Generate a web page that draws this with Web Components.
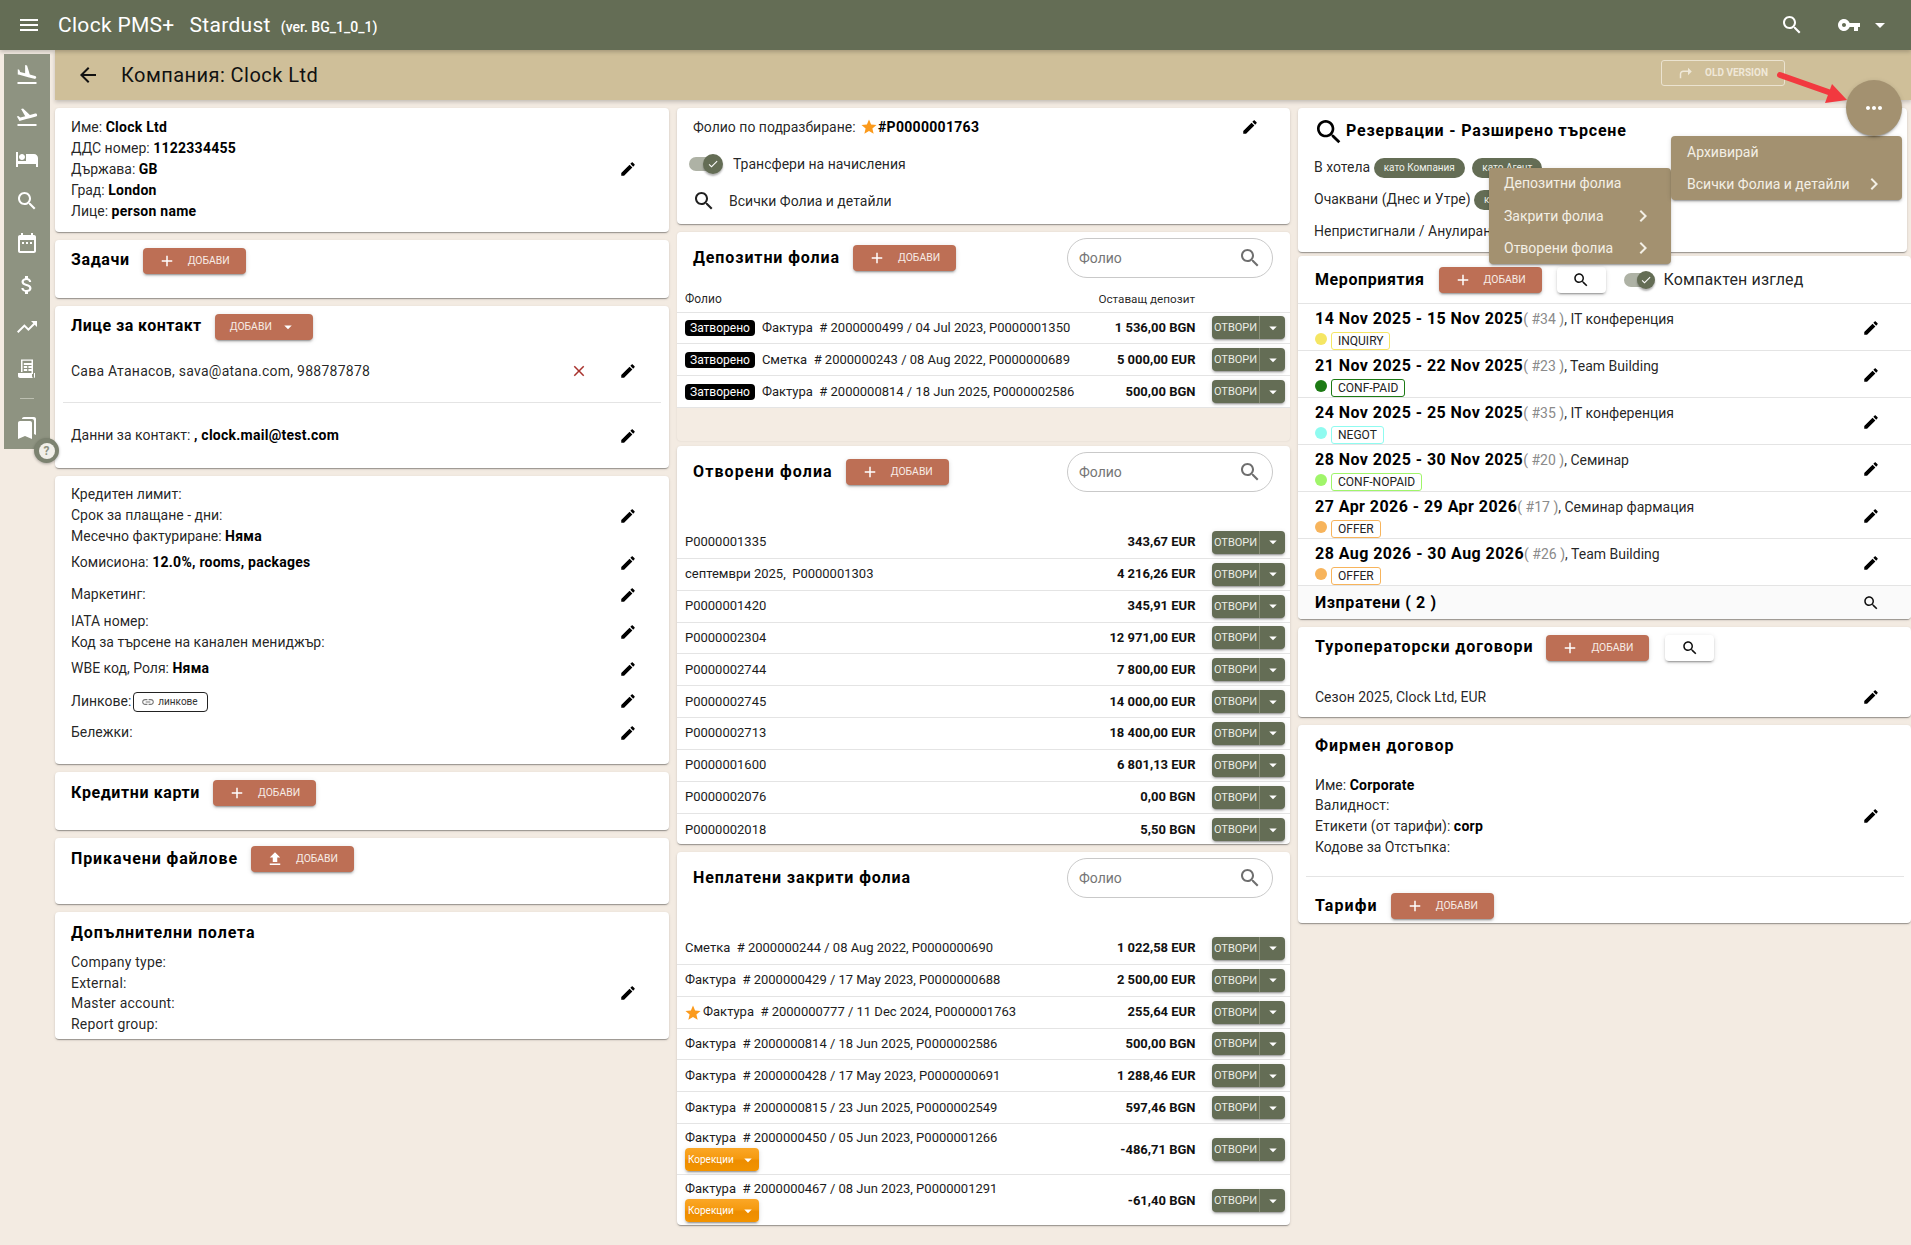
<!DOCTYPE html>
<html lang="bg">
<head>
<meta charset="utf-8">
<title>Clock PMS+ Stardust</title>
<style>
  html, body { margin: 0; height: 100%; overflow: hidden; }
  body { background: #f3ebe2; font: 14px/21px Roboto, "Noto Sans", sans-serif; color: rgba(0,0,0,.87); }
</style>
</head>
<body>
<clock-app></clock-app>

<script>
// Material icon paths used across the page
const ICONS = {
  menu: 'M3 18h18v-2H3v2zm0-5h18v-2H3v2zm0-7v2h18V6H3z',
  back: 'M20 11H7.83l5.59-5.59L12 4l-8 8 8 8 1.41-1.41L7.83 13H20v-2z',
  search: 'M15.5 14h-.79l-.28-.27C15.41 12.59 16 11.11 16 9.5 16 5.91 13.09 3 9.5 3S3 5.91 3 9.5 5.91 16 9.5 16c1.61 0 3.09-.59 4.23-1.57l.27.28v.79l5 4.99L20.49 19l-4.99-5zm-6 0C7.01 14 5 11.99 5 9.5S7.01 5 9.5 5 14 7.01 14 9.5 11.99 14 9.5 14z',
  key: 'M12.65 10C11.83 7.67 9.61 6 7 6c-3.31 0-6 2.69-6 6s2.69 6 6 6c2.61 0 4.83-1.67 5.65-4H17v4h4v-4h2v-4H12.65zM7 14c-1.1 0-2-.9-2-2s.9-2 2-2 2 .9 2 2-.9 2-2 2z',
  caret: 'M7 10l5 5 5-5z',
  land: 'M2.5 19h19v2h-19zm7.18-5.73l4.35 1.16 5.31 1.42c.8.21 1.62-.26 1.84-1.06.21-.8-.26-1.62-1.06-1.84l-5.31-1.42-2.76-9.02L10.12 2v8.28L5.15 8.95l-.93-2.32-1.45-.39v5.17l1.6.43 5.31 1.43z',
  takeoff: 'M2.5 19h19v2h-19zm19.57-9.36c-.21-.8-1.04-1.28-1.84-1.06L14.92 10l-6.9-6.43-1.93.51 4.14 7.17-4.97 1.33-1.97-1.54-1.45.39 1.82 3.16.77 1.33 1.6-.43 5.31-1.42 4.35-1.16L21 11.49c.81-.23 1.28-1.05 1.07-1.85z',
  hotel: 'M7 13c1.66 0 3-1.34 3-3S8.66 7 7 7s-3 1.34-3 3 1.34 3 3 3zm12-6h-8v7H3V5H1v15h2v-3h18v3h2v-9c0-2.21-1.79-4-4-4z',
  calendar: 'M9 11H7v2h2v-2zm4 0h-2v2h2v-2zm4 0h-2v2h2v-2zm2-7h-1V2h-2v2H8V2H6v2H5c-1.11 0-1.99.9-1.99 2L3 20c0 1.1.89 2 2 2h14c1.1 0 2-.9 2-2V6c0-1.1-.9-2-2-2zm0 16H5V9h14v11z',
  money: 'M11.8 10.9c-2.27-.59-3-1.2-3-2.15 0-1.09 1.01-1.85 2.7-1.85 1.78 0 2.44.85 2.5 2.1h2.21c-.07-1.72-1.12-3.3-3.21-3.81V3h-3v2.16c-1.94.42-3.5 1.68-3.5 3.61 0 2.31 1.91 3.46 4.7 4.13 2.5.6 3 1.48 3 2.41 0 .69-.49 1.79-2.7 1.79-2.06 0-2.87-.92-2.98-2.1h-2.2c.12 2.19 1.76 3.42 3.68 3.83V21h3v-2.15c1.95-.37 3.5-1.5 3.5-3.55 0-2.84-2.43-3.81-4.7-4.4z',
  trend: 'M16 6l2.29 2.29-4.88 4.88-4-4L2 16.59 3.41 18l6-6 4 4 6.3-6.29L22 12V6z',
  ledger: 'M6 2l1 1 1-1 1 1 1-1 1 1 1-1 1 1 1-1 1 1 1-1 1 1 1-1v15h-1.5V3.8H7.5V15H6zM8.8 6h8v2h-8zm0 3h3.4v2H8.8zm4.6 0h3.4v2h-3.4zm-4.6 3h3.4v2H8.8zm4.6 0h3.4v2h-3.4zM3 16h14v3c0 1.1.6 2 1.6 2H5c-1.1 0-2-.9-2-2zm16 0h1v3.5c0 .8-.4 1.5-1 1.5z',
  bookmarks: 'M19 18l2 1V3c0-1.1-.9-2-2-2H8.99C7.89 1 7 1.9 7 3h10c1.1 0 2 .9 2 2v13zM15 5H5c-1.1 0-2 .9-2 2v16l7-3 7 3V7c0-1.1-.9-2-2-2z',
  edit: 'M3 17.25V21h3.75L17.81 9.94l-3.75-3.75L3 17.25zM20.71 7.04c.39-.39.39-1.02 0-1.41l-2.34-2.34c-.39-.39-1.02-.39-1.41 0l-1.83 1.83 3.75 3.75 1.83-1.83z',
  add: 'M19 13h-6v6h-2v-6H5v-2h6V5h2v6h6v2z',
  close: 'M19 6.41L17.59 5 12 10.59 6.41 5 5 6.41 10.59 12 5 17.59 6.41 19 12 13.41 17.59 19 19 17.59 13.41 12z',
  star: 'M12 17.27L18.18 21l-1.64-7.03L22 9.24l-7.19-.61L12 2 9.19 8.63 2 9.24l5.46 4.73L5.82 21z',
  chevron: 'M10 6L8.59 7.41 13.17 12l-4.58 4.59L10 18l6-6z',
  upload: 'M9 16h6v-6h4l-7-7-7 7h4zm-4 2h14v2H5z',
  link: 'M3.9 12c0-1.71 1.39-3.1 3.1-3.1h4V7H7c-2.76 0-5 2.24-5 5s2.24 5 5 5h4v-1.9H7c-1.71 0-3.1-1.39-3.1-3.1zM8 13h8v-2H8v2zm9-6h-4v1.9h4c1.71 0 3.1 1.39 3.1 3.1s-1.39 3.1-3.1 3.1h-4V17h4c2.76 0 5-2.24 5-5s-2.24-5-5-5z',
  more: 'M6 10c-1.1 0-2 .9-2 2s.9 2 2 2 2-.9 2-2-.9-2-2-2zm12 0c-1.1 0-2 .9-2 2s.9 2 2 2 2-.9 2-2-.9-2-2-2zm-6 0c-1.1 0-2 .9-2 2s.9 2 2 2 2-.9 2-2-.9-2-2-2z',
  check: 'M9 16.17L4.83 12l-1.42 1.41L9 19 21 7l-1.41-1.41z',
  forward: 'M21 10l-5-5v3.6h-6C7 8.6 5 10.6 5 13.6V19h2v-5.4c0-1.8 1.2-3 3-3h6V15z',
}

const CARD_SHADOW = '0 2px 1px -1px rgba(0,0,0,.2), 0 1px 1px 0 rgba(0,0,0,.14), 0 1px 3px 0 rgba(0,0,0,.12)'
const RAISED = '0 3px 1px -2px rgba(0,0,0,.2), 0 2px 2px 0 rgba(0,0,0,.14), 0 1px 5px 0 rgba(0,0,0,.12)'

const icon = (name, size = 24, color = 'currentColor') =>
  `<svg width="${size}" height="${size}" viewBox="0 0 24 24" fill="${color}" style="display:block;flex:none"><path d="${ICONS[name]}"/></svg>`

// Small base class: subclasses return their markup from html()
class ShadowElement extends HTMLElement {
  connectedCallback() {
    if (this.shadowRoot) return
    this.attachShadow({ mode: 'open' })
    this.shadowRoot.innerHTML = this.html()
  }
  attr(name, fallback = '') {
    return this.getAttribute(name) ?? fallback
  }
}

class PmsIcon extends ShadowElement {
  html() {
    return `<style>:host { display: inline-flex; flex: none; }</style>
      ${icon(this.attr('name'), this.attr('size', 24), this.attr('color', 'currentColor'))}`
  }
}

class PmsButton extends ShadowElement {
  html() {
    const lead = this.attr('icon')
    const trail = this.hasAttribute('caret')
    return `<style>
      :host { display: inline-flex; flex: none; }
      button {
        display: flex; align-items: center; height: 26px; padding: 0 16px 0 15px; border: 0; border-radius: 4px;
        background: #bd6f55; color: #f7ece6; font: 400 10.4px/26px Roboto, sans-serif; text-transform: uppercase;
        box-shadow: ${RAISED};
      }
      .lead { margin-right: 12px; }
      .trail { margin-left: 7px; }
    </style>
    <button type="button">
      ${lead ? `<span class="lead">${icon(lead, 18, '#fff')}</span>` : ''}
      <slot></slot>
      ${trail ? `<span class="trail">${icon('caret', 18, '#fff')}</span>` : ''}
    </button>`
  }
}

class FindButton extends ShadowElement {
  html() {
    return `<style>
      :host { display: inline-flex; flex: none; }
      button {
        display: flex; align-items: center; justify-content: center; width: 49px; height: 26px; padding: 0; border: 0;
        border-radius: 4px; background: #fff; box-shadow: ${RAISED}; color: #111;
      }
    </style><button type="button" aria-label="Търси">${icon('search', 18)}</button>`
  }
}

class PmsToggle extends ShadowElement {
  html() {
    return `<style>
      :host { display: inline-flex; align-items: center; flex: none; }
      .track { position: relative; width: var(--track-w, 32px); height: 14px; border-radius: 7px; background: #aeb2a5; }
      .thumb {
        position: absolute; right: var(--thumb-off, -2px); top: 50%; width: var(--thumb, 20px); height: var(--thumb, 20px); margin-top: calc(var(--thumb, 20px) / -2);
        border-radius: 50%; background: #646d55; display: flex; align-items: center; justify-content: center; box-shadow: 0 2px 2px rgba(0,0,0,.3);
      }
      .label { margin-left: var(--toggle-gap, 12px); font: var(--toggle-font, 400 14px/20px Roboto, sans-serif); letter-spacing: var(--toggle-spacing, 0); }
    </style>
    <span class="track"><span class="thumb">${icon('check', 12, '#fff')}</span></span>
    <span class="label"><slot></slot></span>`
  }
}

class PmsCard extends ShadowElement {
  html() {
    return `<style>
      :host { display: block; background: #fff; border-radius: 4px; box-shadow: ${CARD_SHADOW}; overflow: hidden; }
    </style><slot></slot>`
  }
}

// Card header: bold title, then whatever actions are slotted in
class CardHead extends ShadowElement {
  html() {
    return `<style>
      :host { display: flex; align-items: center; gap: 13px; padding: var(--head-pad, 8px 16px 0); height: var(--head-h, 26px); }
      h3 {
        margin: 0; position: relative; top: var(--title-shift, 0); font: 700 16px/22px Roboto, sans-serif;
        letter-spacing: var(--title-spacing, .9px); color: #000; white-space: nowrap;
      }
      .end { margin-left: auto; display: flex; }
    </style>
    <h3>${this.attr('label')}</h3><slot></slot><span class="end"><slot name="end"></slot></span>`
  }
}

// A text block with the pencil at the right, vertically centred on it
class DetailRow extends ShadowElement {
  html() {
    return `<style>
      :host { display: flex; align-items: center; padding: 0 32px 0 16px; min-height: var(--row-h, 0); box-sizing: border-box; }
      .text { flex: 1; line-height: var(--line, 21px); position: relative; top: var(--text-shift, 0); }
      .del { margin-right: 31px; }
    </style>
    <div class="text"><slot></slot></div>
    ${this.hasAttribute('removable') ? `<span class="del">${icon('close', 18, '#a8322d')}</span>` : ''}
    ${icon('edit', 18, '#000')}`
  }
}

class FolioSearch extends ShadowElement {
  html() {
    return `<style>
      :host {
        display: flex; align-items: center; justify-content: space-between; width: 206px; height: 40px; box-sizing: border-box;
        border: 1px solid #c9c9c9; border-radius: 20px; padding: 0 10px 0 11px; color: #757575; font: 14px Roboto, sans-serif;
      }
    </style><span>Фолио</span>${icon('search', 24, '#6f6f6f')}`
  }
}

class OpenButton extends ShadowElement {
  html() {
    return `<style>
      :host {
        display: inline-flex; flex: none; width: 73px; height: 23px; border-radius: 4px; background: #646d55; color: #eceee6;
        font: 400 11px/23px Roboto, sans-serif; box-shadow: ${RAISED};
      }
      .main { width: 47px; text-align: center; border-right: 1px solid #8a9079; }
      .more { flex: 1; display: flex; align-items: center; justify-content: center; }
    </style><span class="main">ОТВОРИ</span><span class="more">${icon('caret', 18, '#fff')}</span>`
  }
}

class FolioRow extends ShadowElement {
  html() {
    const status = this.attr('status')
    const fix = this.hasAttribute('fix')
    return `<style>
      :host {
        display: flex; align-items: center; box-sizing: border-box; min-height: 31.85px; padding: ${fix ? '4px 5px 3px 8px' : '0 5px 0 8px'};
        border-bottom: 1px solid #e4e4e4; font: 13px/20px Roboto, sans-serif; color: #1c1c1c;
      }
      :host([last]) { border-bottom: 0; }
      .text { flex: 1; white-space: nowrap; display: flex; flex-direction: column; align-items: flex-start; }
      .line { display: flex; align-items: center; }
      .state {
        background: #000; color: #fff; border-radius: 4px; height: 16px; line-height: 16px; padding: 0 5px; font-size: 12px; margin-right: 7px;
      }
      .star { margin: 2px 1px 0 -1px; }
      .fix {
        display: flex; align-items: center; justify-content: space-between; box-sizing: border-box; width: 74px; height: 23px; padding: 0 2px 0 3px;
        border-radius: 4px; color: #fff; font-size: 10px; background: linear-gradient(#fba726, #f59a10 45%, #ed8d00 55%, #f29300);
        box-shadow: ${RAISED};
      }
      .amount { font-weight: 700; color: #111; margin-right: 16.5px; white-space: nowrap; }
    </style>
    <div class="text">
      <span class="line">
        ${status ? `<span class="state">${status}</span>` : ''}
        ${this.hasAttribute('star') ? `<span class="star">${icon('star', 18, '#fb9a1c')}</span>` : ''}
        <span><slot></slot></span>
      </span>
      ${fix ? `<span class="fix">Корекции${icon('caret', 18, '#fff')}</span>` : ''}
    </div>
    <span class="amount">${this.attr('amount')}</span>
    <open-button></open-button>`
  }
}

class EventRow extends ShadowElement {
  html() {
    const color = this.attr('color')
    return `<style>
      :host {
        display: flex; box-sizing: border-box; height: 47px; padding: 5px 31px 0 17px; border-bottom: 1px solid #e4e4e4;
        align-items: center; font: 14px/20px Roboto, sans-serif;
      }
      .body { flex: 1; align-self: flex-start; }
      .head { height: 20px; white-space: nowrap; }
      .dates { font: 700 16px/20px Roboto, sans-serif; letter-spacing: .45px; color: #000; }
      .num { color: #8a8a8a; }
      .foot { display: flex; align-items: flex-start; margin-top: 3px; }
      .dot { width: 12px; height: 12px; border-radius: 50%; background: ${color}; margin: 1px 4px 0 0; }
      .tag {
        height: 18px; box-sizing: border-box; border: 1px solid ${color}; border-radius: 3px; padding: 0 6px;
        font-size: 12px; line-height: 16px; color: #222;
      }
      svg { margin-top: -4px; }
    </style>
    <div class="body">
      <div class="head"><span class="dates">${this.attr('dates')}</span><span class="num">( ${this.attr('num')} )</span>, ${this.attr('kind')}</div>
      <div class="foot"><span class="dot"></span><span class="tag">${this.attr('state')}</span></div>
    </div>
    ${icon('edit', 18, '#000')}`
  }
}

class AppToolbar extends ShadowElement {
  html() {
    return `<style>
      :host {
        display: flex; align-items: center; height: 50px; background: #646d55; color: #fff; position: relative; z-index: 3;
        box-shadow: 0 2px 4px rgba(0,0,0,.2); font: 400 21px/50px Roboto, sans-serif; letter-spacing: .3px; padding-left: 17px;
      }
      .brand { margin-left: 17px; }
      .name { margin-left: 15px; }
      small { margin-left: 10px; font-size: 14px; font-weight: 500; letter-spacing: 0; position: relative; top: 2px; }
      .right { margin-left: auto; display: flex; align-items: center; padding-right: 19px; }
    </style>
    ${icon('menu')}
    <span class="brand">Clock PMS+</span><span class="name">Stardust</span><small>(ver. BG_1_0_1)</small>
    <span class="right">${icon('search')}<span style="width:33px"></span>${icon('key')}<span style="width:7px"></span>${icon('caret')}</span>`
  }
}

class SideRail extends ShadowElement {
  html() {
    const items = ['land', 'takeoff', 'hotel', 'search', 'calendar', 'money', 'trend', 'ledger']
    return `<style>
      :host { display: block; position: relative; width: 46px; margin: 4px 0 0 4px; background: #8e9381; height: 395px; color: #fff; }
      .item { height: 42px; display: flex; align-items: center; justify-content: center; }
      hr { width: 14px; margin: 8px auto 8px; border: 0; border-top: 1px solid #bcbfb1; height: 0; }
      .help {
        position: absolute; left: 30px; top: 384px; width: 25px; height: 25px; border-radius: 50%; background: #7c8270;
        display: flex; align-items: center; justify-content: center; box-shadow: 0 1px 3px rgba(0,0,0,.3);
      }
      .help span {
        width: 16px; height: 16px; border-radius: 50%; background: #f1efe9; color: #8e9381; font: 700 12px/16px Roboto, sans-serif; text-align: center;
      }
    </style>
    ${items.map(n => `<div class="item">${icon(n)}</div>`).join('')}
    <hr>
    <div class="item">${icon('bookmarks')}</div>
    <div class="help"><span>?</span></div>`
  }
}

class PageHeader extends ShadowElement {
  html() {
    return `<style>
      :host {
        display: flex; align-items: center; height: 50px; background: #cfbf99; position: relative; z-index: 2;
        box-shadow: 0 2px 4px rgba(0,0,0,.2); padding-left: 21px; color: #111; font: 400 20px/50px Roboto, sans-serif;
      }
      h1 { font: inherit; letter-spacing: .45px; margin: 0 0 0 21px; }
      .old {
        display: flex; align-items: center; box-sizing: border-box; width: 124px; height: 26px; margin: -4px 126px 0 auto; padding: 0 16px 0 14px;
        border: 1px solid #ebe3d0; border-radius: 3px; color: #efe8d8; font: 700 10px/24px Roboto, sans-serif; justify-content: space-between;
      }
    </style>
    ${icon('back')}<h1>${this.attr('label')}</h1>
    <span class="old">${icon('forward', 18, '#efe8d8')}OLD VERSION</span>`
  }
}

// The open speed-dial menus and the red annotation arrow lie over the third column
class SpeedDial extends ShadowElement {
  html() {
    const item = (text, more) => `<div class="item"><span>${text}</span>${more ? icon('chevron', 24, '#f3efe5') : ''}</div>`
    return `<style>
      :host { position: absolute; inset: 0; z-index: 5; pointer-events: none; font: 14px/32px Roboto, sans-serif; color: #f3efe5; }
      .fab {
        position: absolute; left: 1846px; top: 80px; width: 56px; height: 56px; border-radius: 50%; background: #a39170;
        display: flex; align-items: center; justify-content: center; box-shadow: ${RAISED};
      }
      .menu { position: absolute; background: #a39170; border-radius: 4px; box-shadow: ${RAISED}; box-sizing: border-box; }
      .m1 { left: 1671px; top: 136px; width: 231px; height: 64px; padding-left: 16px; }
      .m2 { left: 1489px; top: 168px; width: 182px; height: 96px; padding-left: 15px; }
      .m2 .item:first-child span { position: relative; top: -1px; }
      .item { display: flex; align-items: center; justify-content: space-between; height: 32px; white-space: nowrap; padding-right: 16px; }
      svg.arrow { position: absolute; left: 0; top: 0; }
    </style>
    <div class="menu m2">${item('Депозитни фолиа')}${item('Закрити фолиа', 1)}${item('Отворени фолиа', 1)}</div>
    <div class="menu m1">${item('Архивирай')}${item('Всички Фолиа и детайли', 1)}</div>
    <div class="fab">${icon('more', 24, '#fff')}</div>
    <svg class="arrow" width="1911" height="140" viewBox="0 0 1911 140">
      <line x1="1780" y1="75" x2="1834" y2="94" stroke="#f2393f" stroke-width="6" stroke-linecap="round"/>
      <polygon points="1832,84 1847,100 1825,103" fill="#f2393f"/>
    </svg>`
  }
}

class ClockApp extends ShadowElement {
  html() {
    return document.getElementById('app-view').innerHTML
  }
}

customElements.define('pms-icon', PmsIcon)
customElements.define('pms-button', PmsButton)
customElements.define('find-button', FindButton)
customElements.define('pms-toggle', PmsToggle)
customElements.define('pms-card', PmsCard)
customElements.define('card-head', CardHead)
customElements.define('detail-row', DetailRow)
customElements.define('folio-search', FolioSearch)
customElements.define('open-button', OpenButton)
customElements.define('folio-row', FolioRow)
customElements.define('event-row', EventRow)
customElements.define('app-toolbar', AppToolbar)
customElements.define('side-rail', SideRail)
customElements.define('page-header', PageHeader)
customElements.define('speed-dial', SpeedDial)
</script>

<template id="app-view">
  <style>
    :host { display: block; position: relative; width: 1911px; height: 1245px; overflow: hidden; }
    b { font-weight: 700; color: #000; letter-spacing: .25px; }
    .shell { display: flex; }
    .rail { width: 55px; flex: none; position: relative; z-index: 4; }
    .main { flex: 1; min-width: 0; }
    .cols { display: grid; grid-template-columns: 614px 613px 613px; gap: 8px; padding-top: 8px; align-items: start; }
    .col { display: flex; flex-direction: column; gap: 8px; min-width: 0; }
    hr { border: 0; border-top: 1px solid #e4e4e4; margin: 0 8px; }
    .tight { --title-spacing: .6px; }
    .wide { --title-spacing: 1.1px; }
    .up { --title-shift: -1px; }
    .nudge { --text-shift: -1px; }
    .chip {
      display: inline-block; height: 20px; border-radius: 10px; background: #646d55; color: #f1f2ec; font-size: 10px; line-height: 20px;
      padding: 0 10px; vertical-align: 1px;
    }
    .chip + .chip { margin-left: 4px; }
    .find-row { display: flex; align-items: center; padding: 0 16px; }
    .link-chip {
      display: inline-flex; align-items: center; gap: 3px; height: 20px; width: 75px; box-sizing: border-box; padding-left: 7px; margin-left: -1.5px; position: relative; top: 3px;
      border: 1px solid #222; border-radius: 4px; font-size: 10px; color: #333;
    }
    .table-head {
      display: flex; justify-content: space-between; height: 27px; box-sizing: border-box; padding: 3px 95px 0 8px; line-height: 20px;
      font-size: 12px; border-bottom: 1px solid #e4e4e4;
    }
    .res-row { height: 32px; padding: 0 16px; line-height: 32px; white-space: nowrap; }
    .search-head { --head-pad: 6px 17px 7.5px 16px; --head-h: 40px; }
    .folio-gap { --head-pad: 6px 17px 35px 16px; --head-h: 40px; }
    .res-head { display: flex; align-items: flex-start; padding: 8px 0 3px 15px; height: 32px; }
    .res-head h3 { margin: 4px 0 0 1px; font: 700 16px/22px Roboto, sans-serif; letter-spacing: .83px; color: #000; }
  </style>

  <app-toolbar></app-toolbar>
  <div class="shell">
    <div class="rail"><side-rail></side-rail></div>
    <div class="main">
      <page-header label="Компания: Clock Ltd"></page-header>
      <div class="cols">

        <div class="col">
          <pms-card style="height:124px;padding-top:8.5px;box-sizing:border-box">
            <detail-row>
              <div>Име: <b>Clock Ltd</b></div>
              <div>ДДС номер: <b>1122334455</b></div>
              <div>Държава: <b>GB</b></div>
              <div>Град: <b>London</b></div>
              <div>Лице: <b>person name</b></div>
            </detail-row>
          </pms-card>
          <pms-card style="height:58px">
            <card-head class="tight up" label="Задачи"><pms-button icon="add">Добави</pms-button></card-head>
          </pms-card>
          <pms-card style="height:162px">
            <card-head class="up" style="--title-spacing:.45px" label="Лице за контакт"><pms-button caret>Добави</pms-button></card-head>
            <detail-row removable style="--row-h:62px"><span style="letter-spacing:.25px">Сава Атанасов, sava@atana.com, 988787878</span></detail-row>
            <hr>
            <detail-row style="--row-h:65px">Данни за контакт: <b>, clock.mail@test.com</b></detail-row>
          </pms-card>
          <pms-card style="height:288px;padding-top:8px;box-sizing:border-box">
            <detail-row>
              <div>Кредитен лимит:</div>
              <div>Срок за плащане - дни:</div>
              <div>Месечно фактуриране: <b>Няма</b></div>
            </detail-row>
            <detail-row class="nudge" style="--row-h:32px">Комисиона: <b>12.0%, rooms, packages</b></detail-row>
            <detail-row class="nudge" style="--row-h:32px">Маркетинг:</detail-row>
            <detail-row style="--row-h:42px">
              <div>IATA номер:</div>
              <div>Код за търсене на канален мениджър:</div>
            </detail-row>
            <detail-row class="nudge" style="--row-h:32px">WBE код, Роля: <b>Няма</b></detail-row>
            <detail-row class="nudge" style="--row-h:32px">Линкове: <span class="link-chip"><pms-icon name="link" size="14" color="#777"></pms-icon>линкове</span></detail-row>
            <detail-row class="nudge" style="--row-h:32px">Бележки:</detail-row>
          </pms-card>
          <pms-card style="height:58px">
            <card-head class="tight" label="Кредитни карти"><pms-button icon="add">Добави</pms-button></card-head>
          </pms-card>
          <pms-card style="height:66px">
            <card-head label="Прикачени файлове"><pms-button icon="upload">Добави</pms-button></card-head>
          </pms-card>
          <pms-card style="height:127px">
            <card-head label="Допълнителни полета" style="--head-pad:8px 16px 6px;--head-h:26px"></card-head>
            <detail-row style="--line:20.67px;letter-spacing:.2px">
              <div>Company type:</div>
              <div>External:</div>
              <div>Master account:</div>
              <div>Report group:</div>
            </detail-row>
          </pms-card>
        </div>

        <div class="col">
          <pms-card style="height:116px">
            <detail-row style="--row-h:38px;padding-right:31px">Фолио по подразбиране: <pms-icon name="star" size="18" color="#fb9a1c" style="vertical-align:-4px;margin-left:1px"></pms-icon><b style="letter-spacing:.3px">#P0000001763</b></detail-row>
            <div class="find-row" style="height:36px;padding-left:12px"><pms-toggle>Трансфери на начисления</pms-toggle></div>
            <div class="find-row" style="height:38px;padding-left:15px"><pms-icon name="search"></pms-icon><span style="margin-left:13px">Всички Фолиа и детайли</span></div>
          </pms-card>

          <pms-card style="height:209px;margin-bottom:-3px;background:#f4ece3;box-shadow:0 0 2px rgba(0,0,0,.1)">
            <div style="background:#fff">
              <card-head class="search-head" label="Депозитни фолиа">
                <pms-button icon="add">Добави</pms-button><folio-search slot="end"></folio-search>
              </card-head>
              <div class="table-head"><span>Фолио</span><span style="font-size:11.7px">Оставащ депозит</span></div>
              <folio-row status="Затворено" amount="1 536,00 BGN">Фактура &nbsp;# 2000000499 / 04 Jul 2023, P0000001350</folio-row>
              <folio-row status="Затворено" amount="5 000,00 EUR">Сметка &nbsp;# 2000000243 / 08 Aug 2022, P0000000689</folio-row>
              <folio-row status="Затворено" amount="500,00 BGN">Фактура &nbsp;# 2000000814 / 18 Jun 2025, P0000002586</folio-row>
            </div>
          </pms-card>

          <pms-card style="height:398px">
            <card-head class="folio-gap wide" label="Отворени фолиа">
              <pms-button icon="add">Добави</pms-button><folio-search slot="end"></folio-search>
            </card-head>
            <folio-row amount="343,67 EUR">P0000001335</folio-row>
            <folio-row amount="4 216,26 EUR">септември 2025, &nbsp;P0000001303</folio-row>
            <folio-row amount="345,91 EUR">P0000001420</folio-row>
            <folio-row amount="12 971,00 EUR">P0000002304</folio-row>
            <folio-row amount="7 800,00 EUR">P0000002744</folio-row>
            <folio-row amount="14 000,00 EUR">P0000002745</folio-row>
            <folio-row amount="18 400,00 EUR">P0000002713</folio-row>
            <folio-row amount="6 801,13 EUR">P0000001600</folio-row>
            <folio-row amount="0,00 BGN">P0000002076</folio-row>
            <folio-row last amount="5,50 BGN">P0000002018</folio-row>
          </pms-card>

          <pms-card style="height:373px">
            <card-head class="folio-gap" label="Неплатени закрити фолиа">
              <folio-search slot="end"></folio-search>
            </card-head>
            <folio-row amount="1 022,58 EUR">Сметка &nbsp;# 2000000244 / 08 Aug 2022, P0000000690</folio-row>
            <folio-row amount="2 500,00 EUR">Фактура &nbsp;# 2000000429 / 17 May 2023, P0000000688</folio-row>
            <folio-row star amount="255,64 EUR">Фактура &nbsp;# 2000000777 / 11 Dec 2024, P0000001763</folio-row>
            <folio-row amount="500,00 BGN">Фактура &nbsp;# 2000000814 / 18 Jun 2025, P0000002586</folio-row>
            <folio-row amount="1 288,46 EUR">Фактура &nbsp;# 2000000428 / 17 May 2023, P0000000691</folio-row>
            <folio-row amount="597,46 BGN">Фактура &nbsp;# 2000000815 / 23 Jun 2025, P0000002549</folio-row>
            <folio-row fix amount="-486,71 BGN">Фактура &nbsp;# 2000000450 / 05 Jun 2023, P0000001266</folio-row>
            <folio-row fix last amount="-61,40 BGN">Фактура &nbsp;# 2000000467 / 08 Jun 2023, P0000001291</folio-row>
          </pms-card>
        </div>

        <div class="col">
          <pms-card style="height:144px;margin:0 4px -4px 0">
            <div class="res-head"><pms-icon name="search" size="32" color="#000"></pms-icon><h3>Резервации - Разширено търсене</h3></div>
            <div class="res-row">В хотела <span class="chip">като Компания</span> <span class="chip">като Агент</span></div>
            <div class="res-row">Очаквани (Днес и Утре) <span class="chip">като Компания</span></div>
            <div class="res-row">Непристигнали / Анулирани</div>
          </pms-card>

          <pms-card style="height:363px">
            <card-head class="tight" label="Мероприятия" style="--head-pad:0 17px;--head-h:47px;border-bottom:1px solid #e4e4e4;gap:0">
              <pms-button icon="add" style="margin-left:14px">Добави</pms-button>
              <find-button style="margin-left:15px"></find-button>
              <pms-toggle style="margin-left:18px;--track-w:28px;--thumb:18px;--thumb-off:-3px;--toggle-gap:12px;--toggle-font:400 16px/20px Roboto,sans-serif;--toggle-spacing:.15px">Компактен изглед</pms-toggle>
            </card-head>
            <event-row dates="14 Nov 2025 - 15 Nov 2025" num="#34" kind="IT конференция" state="INQUIRY" color="#f5e663"></event-row>
            <event-row dates="21 Nov 2025 - 22 Nov 2025" num="#23" kind="Team Building" state="CONF-PAID" color="#1c7a14"></event-row>
            <event-row dates="24 Nov 2025 - 25 Nov 2025" num="#35" kind="IT конференция" state="NEGOT" color="#8ffbf0"></event-row>
            <event-row dates="28 Nov 2025 - 30 Nov 2025" num="#20" kind="Семинар" state="CONF-NOPAID" color="#a0f56a"></event-row>
            <event-row dates="27 Apr 2026 - 29 Apr 2026" num="#17" kind="Семинар фармация" state="OFFER" color="#f7b45c"></event-row>
            <event-row dates="28 Aug 2026 - 30 Aug 2026" num="#26" kind="Team Building" state="OFFER" color="#f7b45c"></event-row>
            <card-head class="tight" label="Изпратени ( 2 )" style="--head-pad:0 31px 0 17px;--head-h:33px;background:#fafafa">
              <pms-icon slot="end" name="search" size="18" color="#111"></pms-icon>
            </card-head>
          </pms-card>

          <pms-card style="height:90px">
            <card-head class="up" label="Туроператорски договори" style="--head-pad:8px 17px 0">
              <pms-button icon="add">Добави</pms-button>
              <find-button style="margin-left:3px"></find-button>
            </card-head>
            <detail-row style="--row-h:40px;margin-top:16px;padding-left:17px;padding-right:31px">Сезон 2025, Clock Ltd, EUR</detail-row>
          </pms-card>

          <pms-card style="height:198px">
            <card-head label="Фирмен договор" style="--head-pad:0 17px;--head-h:40px;--title-shift:1px"></card-head>
            <detail-row style="--line:20.67px;margin-top:9.5px;padding-left:17px;padding-right:31px">
              <div>Име: <b>Corporate</b></div>
              <div>Валидност:</div>
              <div>Етикети (от тарифи): <b>corp</b></div>
              <div>Кодове за Отстъпка:</div>
            </detail-row>
            <hr style="margin:19px 7px 0 8px">
            <card-head class="wide" label="Тарифи" style="--head-pad:16px 17px 0">
              <pms-button icon="add">Добави</pms-button>
            </card-head>
          </pms-card>
        </div>

      </div>
    </div>
  </div>
  <speed-dial></speed-dial>
</template>

<script>
  customElements.define('clock-app', ClockApp)
</script>
</body>
</html>
